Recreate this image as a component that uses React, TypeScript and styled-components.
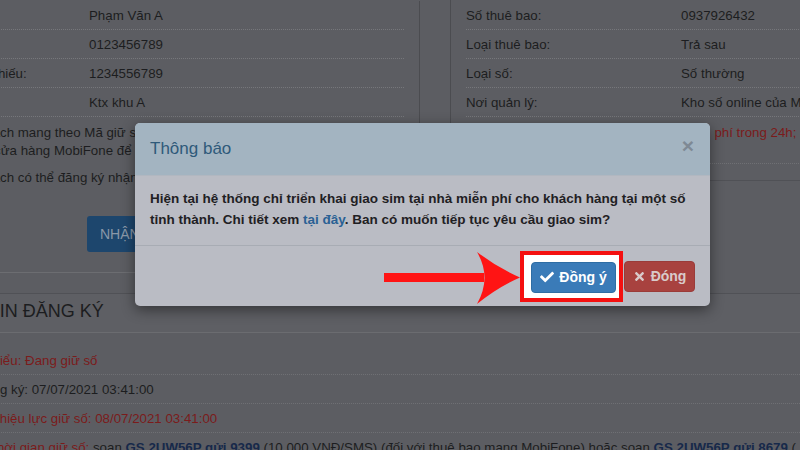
import React from 'react';
import styled, { createGlobalStyle } from 'styled-components';
import { FaCheck, FaTimes } from 'react-icons/fa';

const GlobalStyle = createGlobalStyle`
  html, body {
    margin: 0;
    padding: 0;
    background: #5c5d62;
  }
  body {
    font-family: "Liberation Sans", Arial, sans-serif;
    overflow: hidden;
  }
`;

const topLeftRows = [
  { label: 'Họ và tên:', value: 'Phạm Văn A' },
  { label: 'Số điện thoại:', value: '0123456789' },
  { label: 'Số CMND/Hộ chiếu:', value: '1234556789' },
  { label: 'Địa chỉ:', value: 'Ktx khu A' },
];

const topRightRows = [
  { label: 'Số thuê bao:', value: '0937926432' },
  { label: 'Loại thuê bao:', value: 'Trả sau' },
  { label: 'Loại số:', value: 'Số thường' },
  { label: 'Nơi quản lý:', value: 'Kho số online của MobiFone' },
];

const App: React.FC = () => {
  return (
    <>
      <GlobalStyle />
      <Page>
        <Shift>
          <TopGrid>
            <LeftPanel>
              {topLeftRows.map((row) => (
                <InfoRow key={row.label} $labelWidth={182} $indent={6}>
                  <span>{row.label}</span>
                  <span>{row.value}</span>
                </InfoRow>
              ))}
              <Paragraph>
                Cách 1: Quý khách mang theo Mã giữ số và giấy tờ tùy thân
                <br />
                tờ tùy thân đến cửa hàng MobiFone để nhận sim
              </Paragraph>
              <Paragraph $gap={9}>Cách 2: Quý khách có thể đăng ký nhận sim tại nhà</Paragraph>
              <ButtonRow>
                <DarkButton>Nhận sim tại nhà</DarkButton>
              </ButtonRow>
            </LeftPanel>
            <RightPanel>
              {topRightRows.map((row) => (
                <InfoRow key={row.label} $labelWidth={215}>
                  <span>{row.label}</span>
                  <span>{row.value}</span>
                </InfoRow>
              ))}
              <Note>Quý khách được giao sim tận nhà miễn phí trong 24h;</Note>
            </RightPanel>
          </TopGrid>

          <Section>
            <SectionHeader>THÔNG TIN ĐĂNG KÝ</SectionHeader>
            <SectionRows>
              <DetailRow $tone="red">Ghi chú biểu: Đang giữ số</DetailRow>
              <DetailRow>Ngày đăng ký: 07/07/2021 03:41:00</DetailRow>
              <DetailRow $tone="red">Thời hạn hiệu lực giữ số: 08/07/2021 03:41:00</DetailRow>
              <DetailRow>
                <Red>Gia hạn thời gian giữ số:</Red> soạn <Code>GS 2UW56P gửi 9399</Code> (10.000
                VNĐ/SMS) (đối với thuê bao mạng MobiFone) hoặc soạn <Code>GS 2UW56P gửi 8679</Code> (
              </DetailRow>
            </SectionRows>
          </Section>
        </Shift>

        <Modal>
          <ModalHeader>
            <ModalTitle>Thông báo</ModalTitle>
            <CloseButton>×</CloseButton>
          </ModalHeader>
          <ModalBody>
            Hiện tại hệ thống chỉ triển khai giao sim tại nhà miễn phí cho khách hàng tại một số
            tỉnh thành. Chi tiết xem <Link>tại đây</Link>. Ban có muốn tiếp tục yêu cầu giao sim?
          </ModalBody>
          <ModalFooter>
            <Highlight>
              <ActionButton $variant="primary">
                <FaCheck size={14} /> Đồng ý
              </ActionButton>
            </Highlight>
            <ActionButton $variant="danger">
              <FaTimes size={13} /> Đóng
            </ActionButton>
          </ModalFooter>
          <Arrow width="145" height="60" viewBox="0 0 145 60">
            <rect x="4" y="25" width="100" height="9" fill="#ff1414" />
            <path d="M97,4 Q118,20 140,29.5 Q118,39 97,56 Q112,29.5 97,4 Z" fill="#ff1414" />
          </Arrow>
        </Modal>
      </Page>
    </>
  );
};

export default App;

const Page = styled.div`
  position: relative;
  width: 800px;
  height: 450px;
  overflow: hidden;
  background: #5c5d62;
  color: #1c1d20;
  font-size: 13.3px;
`;

const Shift = styled.div`
  margin-left: -114px;
  width: 1100px;
`;

const TopGrid = styled.div`
  display: grid;
  grid-template-columns: 534px 460px;
  column-gap: 30px;
  align-items: start;
  padding-top: 1px;
`;

const LeftPanel = styled.div`
  border-right: 1px solid #4b4c50;
  border-bottom: 1px solid #6c6d71;
  padding: 0 15px 20px;
`;

const RightPanel = styled.div`
  border-left: 1px solid #4b4c50;
  border-bottom: 1px solid #505156;
  padding: 1px 15px 16px;
  margin-top: -1px;
`;

const InfoRow = styled.div<{ $labelWidth: number; $indent?: number }>`
  display: grid;
  grid-template-columns: ${(p) => p.$labelWidth}px 1fr;
  align-items: center;
  height: 28px;
  padding-left: ${(p) => p.$indent ?? 0}px;
  border-bottom: 1px dotted #76777b;
  white-space: nowrap;
`;

const Paragraph = styled.p<{ $gap?: number }>`
  margin: ${(p) => p.$gap ?? 7}px 0 0;
  line-height: 18px;
  white-space: nowrap;
`;

const ButtonRow = styled.div`
  margin-top: 29px;
  padding-left: 186px;
`;

const DarkButton = styled.button`
  height: 36px;
  padding: 0 13px;
  border: none;
  border-radius: 3px;
  background: #1d466d;
  color: #8a98a8;
  font-family: inherit;
  font-size: 14px;
  text-transform: uppercase;
  white-space: nowrap;
`;

const Note = styled.div`
  padding: 7px 0 21px 12px;
  line-height: 18px;
  color: #7b1b1b;
  white-space: nowrap;
  border-bottom: 1px dotted #6f7074;
`;

const Section = styled.div`
  margin-top: 20px;
`;

const SectionHeader = styled.h3`
  margin: 0;
  height: 40px;
  display: flex;
  align-items: center;
  padding-left: 33px;
  padding-bottom: 3px;
  box-sizing: border-box;
  border-top: 1px solid #505156;
  border-bottom: 1px solid #6b6c70;
  background: #5e5f64;
  font-size: 18px;
  font-weight: normal;
  color: #1c1d20;
`;

const SectionRows = styled.div`
  padding: 13px 0 0 57px;
`;

const DetailRow = styled.div<{ $tone?: 'red' }>`
  height: 28px;
  display: flex;
  align-items: center;
  border-bottom: 1px dotted #6f7074;
  white-space: pre;
  color: ${(p) => (p.$tone === 'red' ? '#7b1b1b' : '#1c1d20')};
`;

const Red = styled.span`
  color: #7b1b1b;
`;

const Code = styled.b`
  color: #17294a;
`;

const Modal = styled.div`
  position: absolute;
  left: 135px;
  top: 123px;
  width: 575px;
  background: #babcc4;
  border-radius: 5px;
  box-shadow: 0 4px 14px rgba(0, 0, 0, 0.45);
`;

const ModalHeader = styled.div`
  display: flex;
  align-items: center;
  justify-content: space-between;
  height: 53px;
  box-sizing: border-box;
  padding: 0 15px;
  background: #a3b4c1;
  border-bottom: 1px solid #b1b7c0;
  border-radius: 5px 5px 0 0;
`;

const ModalTitle = styled.h4`
  margin: 0;
  font-size: 17px;
  font-weight: normal;
  color: #2f5a7a;
`;

const CloseButton = styled.span`
  font-size: 21px;
  font-weight: bold;
  color: #7e8994;
  margin-right: 1px;
  margin-top: -6px;
`;

const ModalBody = styled.div`
  padding: 12px 15px 15px;
  font-size: 13.5px;
  font-weight: bold;
  line-height: 21px;
  color: #1f2023;
`;

const Link = styled.span`
  color: #2a6194;
`;

const ModalFooter = styled.div`
  display: flex;
  justify-content: flex-end;
  align-items: center;
  gap: 1px;
  height: 61px;
  box-sizing: border-box;
  padding: 15px;
  border-top: 1px solid #a8acb4;
`;

const Highlight = styled.div`
  display: flex;
  border: 4px solid #f41010;
  background: #ffffff;
  padding: 7px 3px 5px 7px;
`;

const ActionButton = styled.button<{ $variant: 'primary' | 'danger' }>`
  display: inline-flex;
  align-items: center;
  justify-content: center;
  gap: 5px;
  height: 31px;
  padding: 0 10px;
  border-radius: 4px;
  border: 1px solid ${(p) => (p.$variant === 'primary' ? '#2e6da4' : '#9a3b39')};
  background: ${(p) => (p.$variant === 'primary' ? '#3a7bb8' : '#a8423f')};
  color: ${(p) => (p.$variant === 'primary' ? '#ffffff' : '#d9cbcb')};
  font-family: inherit;
  font-size: 14px;
  font-weight: bold;
  white-space: nowrap;
  width: ${(p) => (p.$variant === 'primary' ? '85px' : '71px')};

  svg {
    flex: none;
  }
`;

const Arrow = styled.svg`
  position: absolute;
  left: 245px;
  top: 125px;
`;
